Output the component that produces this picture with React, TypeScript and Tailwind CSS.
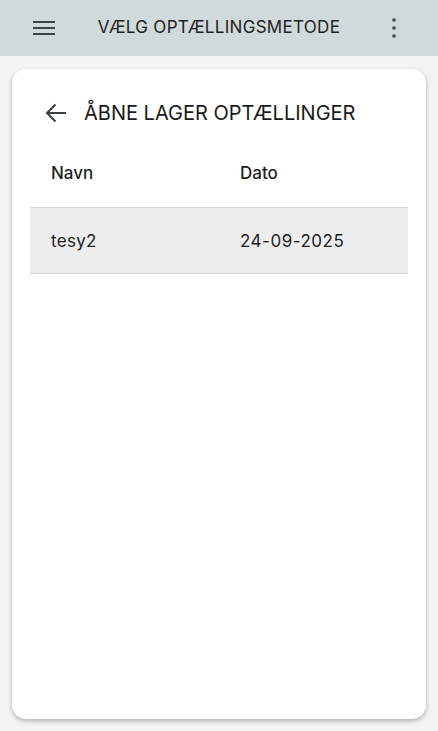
import React from "react";

const rows = [{ name: "tesy2", date: "24-09-2025" }];

export default function App() {
    return (
        <div
            className="flex h-[731px] flex-col bg-[#f4f4f4] text-[#1f1f1f]"
            style={{ fontFamily: "Inter, 'Noto Sans', sans-serif" }}
        >
            <header className="flex h-14 shrink-0 items-center justify-between bg-[#d1dada] px-[33px]">
                <svg width="22" height="16" viewBox="0 0 22 16" className="text-[#3b4545]">
                    <rect x="0" y="1" width="22" height="2" fill="currentColor" />
                    <rect x="0" y="7" width="22" height="2" fill="currentColor" />
                    <rect x="0" y="13" width="22" height="2" fill="currentColor" />
                </svg>
                <h1 className="text-[17px] tracking-[0.3px] text-[#1e2222]">VÆLG OPTÆLLINGSMETODE</h1>
                <svg width="22" height="22" viewBox="0 0 22 22" className="text-[#3b4545]">
                    <circle cx="11" cy="3" r="1.8" fill="currentColor" />
                    <circle cx="11" cy="11" r="1.8" fill="currentColor" />
                    <circle cx="11" cy="19" r="1.8" fill="currentColor" />
                </svg>
            </header>

            <main className="mx-3 mb-3 mt-[13px] flex-1 rounded-[14px] bg-white px-[18px] shadow-[0_2px_5px_rgba(0,0,0,0.28)]">
                <div className="flex items-center pl-[15px] pt-[32px]">
                    <svg width="22" height="20" viewBox="0 0 22 20" fill="none" className="text-[#3b4040]">
                        <path d="M21 10H2M10.5 1.5L2 10l8.5 8.5" stroke="currentColor" strokeWidth="2" />
                    </svg>
                    <h2 className="ml-[17px] text-[20px] leading-[24px] text-[#1a1a1a]">ÅBNE LAGER OPTÆLLINGER</h2>
                </div>

                <table className="mt-[16px] w-full table-fixed border-collapse text-[17px]">
                    <thead>
                        <tr className="h-[66px] border-b border-[#d4d4d4]">
                            <th className="w-1/2 pl-[21px] text-left font-medium">Navn</th>
                            <th className="w-1/2 pl-[21px] text-left font-medium">Dato</th>
                        </tr>
                    </thead>
                    <tbody>
                        {rows.map((row) => (
                            <tr key={row.name} className="h-[66px] border-b border-[#d4d4d4] bg-[#ededed]">
                                <td className="pl-[21px] pt-1 tracking-[0.3px]">{row.name}</td>
                                <td className="pl-[21px] pt-1 tracking-[0.5px]">{row.date}</td>
                            </tr>
                        ))}
                    </tbody>
                </table>
            </main>
        </div>
    );
}
